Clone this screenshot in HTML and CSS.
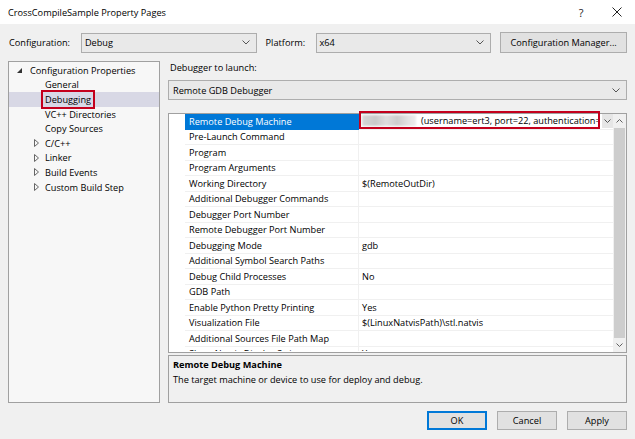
FILE: index.html
```html
<!DOCTYPE html>
<html>
<head>
<meta charset="utf-8">
<link rel="stylesheet" href="styles.css">
</head>
<body>
<div class="window">
  <div class="titlebar">
    <span class="title">CrossCompileSample Property Pages</span>
    <span class="tb-btn help">?</span>
    <span class="tb-btn close"><svg width="10" height="10" viewBox="0 0 10 10"><path d="M0.5 0.5 L9.5 9.5 M9.5 0.5 L0.5 9.5" stroke="#222" stroke-width="1"/></svg></span>
  </div>
  <div class="content">
    <div class="config-row">
      <span class="lbl lbl-config">Configuration:</span>
      <div class="combo combo-config"><span class="combo-text">Debug</span><svg class="chev" width="8" height="5" viewBox="0 0 8 5"><polyline points="0.5,0.5 4,4 7.5,0.5" fill="none" stroke="#555"/></svg></div>
      <span class="lbl lbl-platform">Platform:</span>
      <div class="combo combo-platform"><span class="combo-text">x64</span><svg class="chev" width="8" height="5" viewBox="0 0 8 5"><polyline points="0.5,0.5 4,4 7.5,0.5" fill="none" stroke="#555"/></svg></div>
      <div class="btn btn-cfgmgr">Configuration Manager...</div>
    </div>
    <div class="main">
      <div class="tree">
        <div class="trow lvl0"><span class="exp"><svg width="5" height="5" viewBox="0 0 5 5"><polygon points="5,0 5,5 0,5" fill="#333"/></svg></span><span>Configuration Properties</span></div>
        <div class="trow lvl1"><span class="exp"></span><span>General</span></div>
        <div class="trow lvl1 sel"><span class="exp"></span><span class="redbox-tree">Debugging</span></div>
        <div class="trow lvl1"><span class="exp"></span><span>VC++ Directories</span></div>
        <div class="trow lvl1"><span class="exp"></span><span>Copy Sources</span></div>
        <div class="trow lvl1"><span class="exp"><svg width="5" height="8" viewBox="0 0 5 8"><polygon points="0.5,0.5 4.5,4 0.5,7.5" fill="none" stroke="#666"/></svg></span><span>C/C++</span></div>
        <div class="trow lvl1"><span class="exp"><svg width="5" height="8" viewBox="0 0 5 8"><polygon points="0.5,0.5 4.5,4 0.5,7.5" fill="none" stroke="#666"/></svg></span><span>Linker</span></div>
        <div class="trow lvl1"><span class="exp"><svg width="5" height="8" viewBox="0 0 5 8"><polygon points="0.5,0.5 4.5,4 0.5,7.5" fill="none" stroke="#666"/></svg></span><span>Build Events</span></div>
        <div class="trow lvl1"><span class="exp"><svg width="5" height="8" viewBox="0 0 5 8"><polygon points="0.5,0.5 4.5,4 0.5,7.5" fill="none" stroke="#666"/></svg></span><span>Custom Build Step</span></div>
      </div>
      <div class="right">
        <div class="dlabel">Debugger to launch:</div>
        <div class="combo combo-wide"><span class="combo-text">Remote GDB Debugger</span><svg class="chev" width="8" height="5" viewBox="0 0 8 5"><polyline points="0.5,0.5 4,4 7.5,0.5" fill="none" stroke="#555"/></svg></div>
        <div class="grid">
          <div class="rows">
            <div class="row"><div class="gut"></div><div class="name selname">Remote Debug Machine</div><div class="val val-first"><span class="redbox-val"><span class="blur"></span><span class="vtext">(username=ert3, port=22, authentication=</span></span><span class="ddbtn"><svg width="7" height="4" viewBox="0 0 7 4"><polyline points="0.5,0.5 3.5,3.5 6.5,0.5" fill="none" stroke="#555"/></svg></span></div></div>
            <div class="row"><div class="gut"></div><div class="name">Pre-Launch Command</div><div class="val"></div></div>
            <div class="row"><div class="gut"></div><div class="name">Program</div><div class="val"></div></div>
            <div class="row"><div class="gut"></div><div class="name">Program Arguments</div><div class="val"></div></div>
            <div class="row"><div class="gut"></div><div class="name">Working Directory</div><div class="val">$(RemoteOutDir)</div></div>
            <div class="row"><div class="gut"></div><div class="name">Additional Debugger Commands</div><div class="val"></div></div>
            <div class="row"><div class="gut"></div><div class="name">Debugger Port Number</div><div class="val"></div></div>
            <div class="row"><div class="gut"></div><div class="name">Remote Debugger Port Number</div><div class="val"></div></div>
            <div class="row"><div class="gut"></div><div class="name">Debugging Mode</div><div class="val">gdb</div></div>
            <div class="row"><div class="gut"></div><div class="name">Additional Symbol Search Paths</div><div class="val"></div></div>
            <div class="row"><div class="gut"></div><div class="name">Debug Child Processes</div><div class="val">No</div></div>
            <div class="row"><div class="gut"></div><div class="name">GDB Path</div><div class="val"></div></div>
            <div class="row"><div class="gut"></div><div class="name">Enable Python Pretty Printing</div><div class="val">Yes</div></div>
            <div class="row"><div class="gut"></div><div class="name">Visualization File</div><div class="val">$(LinuxNatvisPath)\stl.natvis</div></div>
            <div class="row"><div class="gut"></div><div class="name">Additional Sources File Path Map</div><div class="val"></div></div>
            <div class="row row-partial"><div class="gut"></div><div class="name">Show Natvis Display Strings</div><div class="val">Yes</div></div>
          </div>
          <div class="scrollbar">
            <div class="sb-arrow"><svg width="7" height="4" viewBox="0 0 7 4"><polyline points="0.5,3.5 3.5,0.5 6.5,3.5" fill="none" stroke="#606060"/></svg></div>
            <div class="sb-thumb"></div>
            <div class="sb-arrow"><svg width="7" height="4" viewBox="0 0 7 4"><polyline points="0.5,0.5 3.5,3.5 6.5,0.5" fill="none" stroke="#606060"/></svg></div>
          </div>
        </div>
        <div class="desc">
          <div class="desc-title">Remote Debug Machine</div>
          <div class="desc-text">The target machine or device to use for deploy and debug.</div>
        </div>
      </div>
    </div>
    <div class="buttons">
      <div class="btn btn-dlg btn-default">OK</div>
      <div class="btn btn-dlg">Cancel</div>
      <div class="btn btn-dlg">Apply</div>
    </div>
  </div>
</div>
</body>
</html>
```
FILE: styles.css
```css
* { box-sizing: border-box; }
html, body { margin: 0; padding: 0; }
body {
  width: 635px;
  height: 439px;
  overflow: hidden;
  background: #f0f0f0;
  font-family: "Open Sans", "Noto Sans", sans-serif;
  font-size: 9.2px;
  color: #000;
}
.window { width: 635px; height: 439px; }
.titlebar {
  height: 24px;
  background: #fff;
  display: flex;
  align-items: center;
  padding-left: 8px;
}
.title { flex: 1; white-space: nowrap; }
.tb-btn {
  width: 36px;
  height: 24px;
  display: flex;
  align-items: center;
  justify-content: center;
}
.help { font-size: 11px; color: #222; }

.content { padding: 8px 8px 0 8px; }
.config-row { display: flex; align-items: center; height: 21px; }
.lbl { white-space: nowrap; }
.lbl-config { width: 73px; padding-left: 1px; }
.lbl-platform { width: 50px; margin-left: 9px; }
.combo {
  display: flex;
  align-items: center;
  height: 20px;
  border: 1px solid #adadad;
  background: #e9e9e9;
  padding: 0 6px 0 3px;
}
.combo-text { flex: 1; white-space: nowrap; }
.chev { flex: none; }
.combo-config { width: 176px; }
.combo-platform { width: 176px; }
.btn {
  display: flex;
  align-items: center;
  justify-content: center;
  background: #e1e1e1;
  border: 1px solid #adadad;
  white-space: nowrap;
}
.btn-cfgmgr { width: 127px; height: 21px; margin-left: 9px; }

.main { display: flex; margin-top: 8px; }
.tree {
  width: 152px;
  height: 342px;
  border: 1px solid #a0a0a0;
  background: #f7f7f7;
  padding-top: 1px;
}
.trow {
  display: flex;
  align-items: center;
  height: 14.6px;
  white-space: nowrap;
}
.lvl0 { padding-left: 4px; }
.lvl1 { padding-left: 21px; }
.exp { display: flex; align-items: center; padding-left: 4px; }
.lvl0 .exp { width: 17px; }
.lvl1 .exp { width: 15px; }
.sel { background: #d8d8e5; }
.redbox-tree {
  display: inline-block;
  border: 2px solid #c4001c;
  padding: 0 2px;
  margin-left: -4px;
  height: 19px;
  line-height: 15px;
  margin-top: -2px;
  margin-bottom: -2px;
}

.right { width: 459px; margin-left: 8px; display: flex; flex-direction: column; }
.dlabel { height: 14px; line-height: 14px; padding-left: 2px; }
.combo-wide { width: 459px; margin-top: 5px; padding-left: 4px; }

.grid {
  margin-top: 13px;
  height: 240px;
  border: 1px solid #a0a0a0;
  background: #fff;
  display: flex;
}
.rows { flex: 1; clip-path: inset(-4px 0 0 0); }
.row { display: flex; height: 15.5px; }
.gut { width: 16px; flex: none; }
.name {
  width: 174px;
  flex: none;
  padding-left: 4px;
  border-right: 1px solid #f0f0f0;
  border-bottom: 1px solid #f0f0f0;
  display: flex;
  align-items: center;
  white-space: nowrap;
}
.selname { background: #0078d7; color: #fff; border-color: #0078d7; }
.val {
  flex: 1;
  padding-left: 3px;
  border-bottom: 1px solid #f0f0f0;
  display: flex;
  align-items: center;
  white-space: nowrap;
  overflow: visible;
}
.row-partial { height: 4.5px; overflow: hidden; }
.row-partial .name, .row-partial .val {
  align-items: flex-start;
  border-bottom: none;
  line-height: 12px;
  padding-top: 1.5px;
  overflow: hidden;
}
.val-first { padding-left: 0; }
.redbox-val {
  width: 241px;
  height: 18px;
  margin-top: -2px;
  border: 2px solid #c4001c;
  display: flex;
  align-items: center;
  overflow: hidden;
  white-space: nowrap;
  flex: none;
}
.blur {
  display: inline-block;
  width: 54px;
  height: 11px;
  margin-left: 1px;
  flex: none;
  background: linear-gradient(90deg, #d6d6d6 0%, #c9c9c9 25%, #dedede 45%, #cdcdcd 65%, #e2e2e2 85%, #ececec 100%);
  filter: blur(1.2px);
}
.vtext { margin-left: 5px; }
.ddbtn {
  width: 11px;
  height: 14px;
  margin-left: 2px;
  background: #e6e6e6;
  display: flex;
  align-items: center;
  justify-content: center;
  flex: none;
}
.scrollbar {
  width: 13px;
  flex: none;
  background: #f0f0f0;
  display: flex;
  flex-direction: column;
}
.sb-arrow {
  height: 14px;
  display: flex;
  align-items: center;
  justify-content: center;
  flex: none;
}
.sb-thumb { flex: 1; background: #cdcdcd; margin: 0 1px; }

.desc {
  margin-top: 2px;
  height: 48px;
  border: 1px solid #a0a0a0;
  padding: 1px 4px;
  line-height: 15px;
}
.desc-title { font-weight: bold; }

.buttons {
  display: flex;
  justify-content: flex-end;
  gap: 10px;
  margin-top: 8px;
}
.btn-dlg { width: 60px; height: 19px; }
.btn-default { border-color: #0078d7; box-shadow: inset 0 0 0 1px #0078d7; }
```
